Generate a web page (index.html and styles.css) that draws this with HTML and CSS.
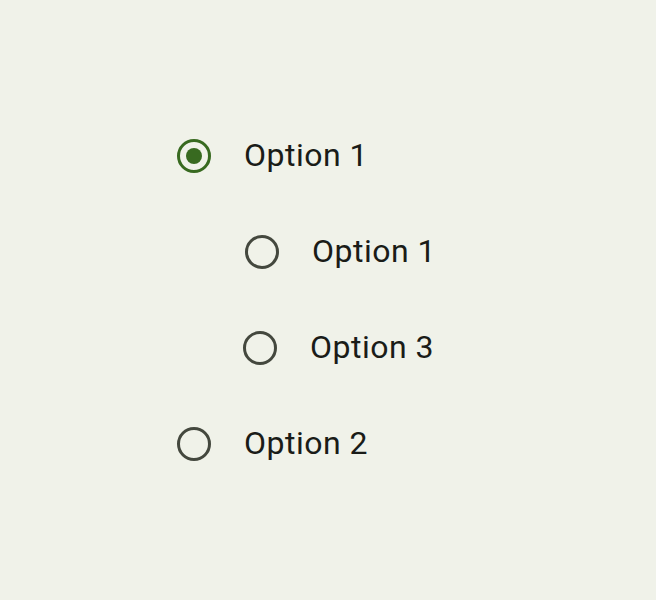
FILE: index.html
```html
<!doctype html>
<html lang="en">
  <head>
    <meta charset="UTF-8" />
    <meta name="viewport" content="width=device-width, initial-scale=1.0" />
    <title>Radio options</title>
    <link rel="stylesheet" href="styles.css">
  </head>
  <body>
    <div class="options" role="radiogroup">
      <label class="option">
        <span class="radio radio--checked"><span class="dot"></span></span>
        <span class="label">Option 1</span>
      </label>
      <label class="option option--nested">
        <span class="radio"></span>
        <span class="label">Option 1</span>
      </label>
      <label class="option option--nested-alt">
        <span class="radio"></span>
        <span class="label">Option 3</span>
      </label>
      <label class="option">
        <span class="radio"></span>
        <span class="label">Option 2</span>
      </label>
    </div>
  </body>
</html>
```

FILE: styles.css
```css
* {
  margin: 0;
  padding: 0;
  box-sizing: border-box;
}

html,
body {
  height: 100%;
  background-color: #f0f2e9;
  color: #1a1c18;
  font-family: Roboto, "Liberation Sans", sans-serif;
}

.options {
  display: flex;
  flex-direction: column;
  padding: 108px 0 0 177px;
}

.option {
  display: flex;
  align-items: center;
  gap: 33px;
  height: 96px;
  cursor: pointer;
}

.option--nested {
  margin-left: 68px;
}

.option--nested-alt {
  margin-left: 66px;
}

.radio {
  display: flex;
  align-items: center;
  justify-content: center;
  width: 34px;
  height: 34px;
  border: 3.4px solid #44483e;
  border-radius: 50%;
  flex-shrink: 0;
}

.radio--checked {
  border-color: #386a20;
}

.dot {
  width: 16px;
  height: 16px;
  border-radius: 50%;
  background-color: #386a20;
}

.label {
  font-size: 32px;
  line-height: 1;
  letter-spacing: 0.5px;
  margin-bottom: 2px;
}
```
